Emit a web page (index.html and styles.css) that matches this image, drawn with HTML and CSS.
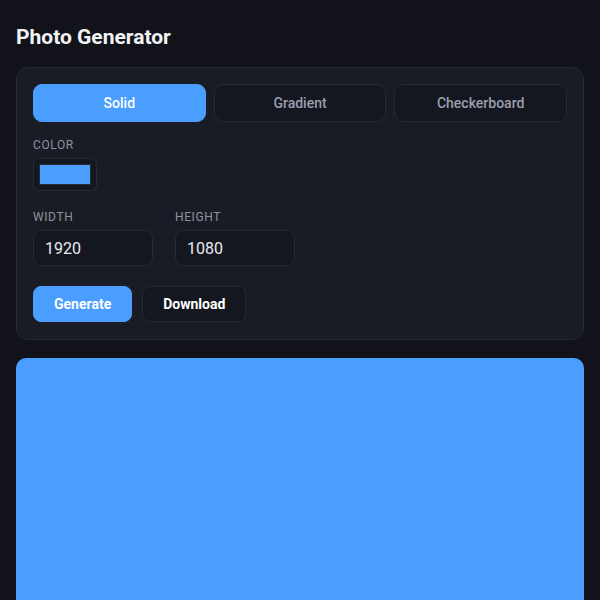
FILE: index.html
```html
<!DOCTYPE html>
<html lang="en">
<head>
<meta charset="utf-8">
<title>Photo Generator</title>
<link rel="stylesheet" href="styles.css">
</head>
<body>
<main class="app">
  <h1 class="title">Photo Generator</h1>
  <section class="card">
    <div class="tabs">
      <button class="tab active">Solid</button>
      <button class="tab">Gradient</button>
      <button class="tab">Checkerboard</button>
    </div>
    <div class="field color-field">
      <label class="label">Color</label>
      <div class="swatch-box"><div class="swatch"></div></div>
    </div>
    <div class="size-row">
      <div class="field">
        <label class="label">Width</label>
        <div class="input">1920</div>
      </div>
      <div class="field">
        <label class="label">Height</label>
        <div class="input">1080</div>
      </div>
    </div>
    <div class="actions">
      <button class="btn primary">Generate</button>
      <button class="btn secondary">Download</button>
    </div>
  </section>
  <div class="preview"></div>
</main>
</body>
</html>
```
FILE: styles.css
```css
html, body {
  margin: 0;
  padding: 0;
  background: #12131a;
  overflow: hidden;
}
body {
  font-family: Roboto, "Liberation Sans", sans-serif;
  color: #e8eaf0;
}
.app {
  padding: 26px 16px 0;
}
.title {
  margin: 0 0 18px;
  font-size: 21px;
  line-height: 23px;
  font-weight: 700;
  color: #f2f3f6;
}
.card {
  background: #1a1c25;
  border: 1px solid #262934;
  border-radius: 12px;
  padding: 16px 16px 17px;
}
.tabs {
  display: grid;
  grid-template-columns: 1fr 1fr 1fr;
  gap: 8px;
  margin-bottom: 16px;
}
.tab {
  height: 38px;
  border-radius: 9px;
  border: 1px solid #262934;
  background: #151720;
  color: #9a9fac;
  font-family: inherit;
  font-size: 14px;
  font-weight: 500;
}
.tab.active {
  background: #4a9eff;
  border-color: #4a9eff;
  color: #ffffff;
}
.field {
  display: flex;
  flex-direction: column;
  gap: 6px;
}
.label {
  font-size: 12px;
  line-height: 14px;
  letter-spacing: 0.6px;
  text-transform: uppercase;
  color: #8d92a0;
}
.color-field {
  margin-bottom: 19px;
}
.swatch-box {
  width: 64px;
  height: 33px;
  box-sizing: border-box;
  padding: 5px;
  background: #151720;
  border: 1px solid #262934;
  border-radius: 6px;
}
.swatch {
  height: 100%;
  background: #4a9eff;
  border: 1px solid #2a2d38;
  box-sizing: border-box;
}
.size-row {
  display: flex;
  gap: 22px;
  margin-bottom: 20px;
}
.size-row .field {
  width: 120px;
}
.input {
  height: 36px;
  box-sizing: border-box;
  padding: 0 11px;
  display: flex;
  align-items: center;
  background: #151720;
  border: 1px solid #262934;
  border-radius: 8px;
  font-size: 16px;
  color: #e8eaf0;
}
.actions {
  display: flex;
  gap: 10px;
}
.btn {
  height: 36px;
  padding: 0 20px;
  border-radius: 8px;
  font-family: inherit;
  font-size: 14px;
  font-weight: 700;
  color: #ffffff;
}
.btn.primary {
  background: #4a9eff;
  border: 1px solid #4a9eff;
}
.btn.secondary {
  background: #151720;
  border: 1px solid #262934;
}
.preview {
  margin-top: 18px;
  height: 400px;
  background: #4a9eff;
  border-radius: 10px;
}
```
